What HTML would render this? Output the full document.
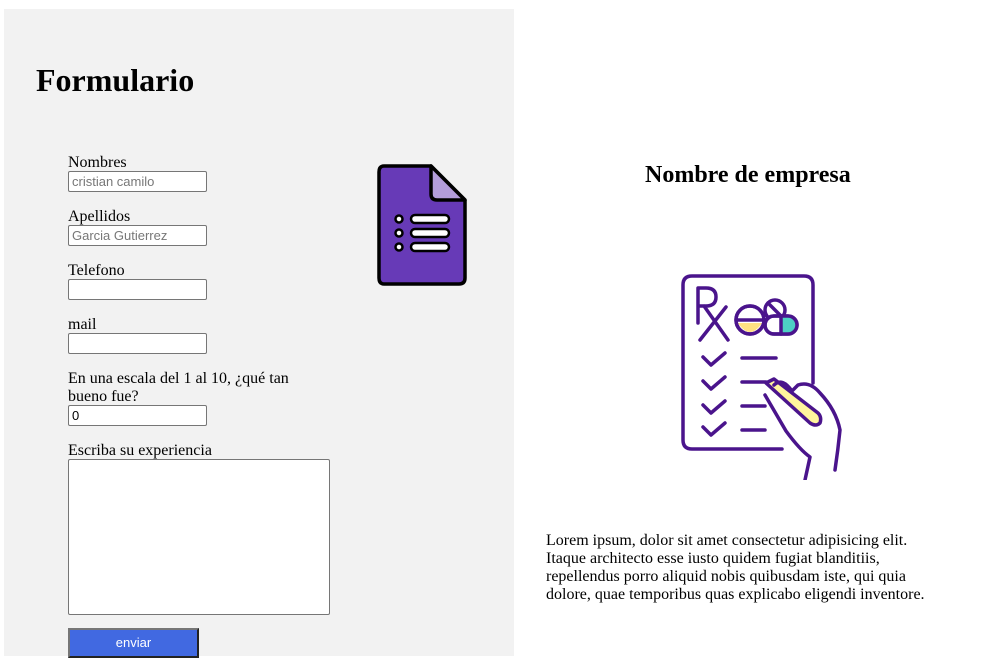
<!DOCTYPE html>
<html><head><meta charset="utf-8"><style>
*{box-sizing:border-box;margin:0;padding:0}
body{width:990px;height:656px;overflow:hidden;background:#fff;font-family:"Liberation Serif",serif;font-size:16px;position:relative}
.left{position:absolute;left:4px;top:9px;width:510px;height:647px;background:#f2f2f2}
h1{position:absolute;left:36px;top:62px;font-size:32px;font-weight:bold}
.lbl{position:absolute;left:68px;line-height:18px}
.in{position:absolute;left:68px;width:139px;height:21px;background:#fff;border:1px solid #767676;border-radius:2px;font-family:"Liberation Sans",sans-serif;font-size:13px;padding:2px 3px;color:#777;line-height:15px}
.ta{position:absolute;left:68px;top:459px;width:262px;height:156px;background:#fff;border:1px solid #767676;border-radius:2px}
.btn{position:absolute;left:68px;top:628px;width:131px;height:30px;background:#4169e1;border:2px solid;border-color:#767676 #222 #222 #767676;color:#fff;font-family:"Liberation Sans",sans-serif;font-size:13px;text-align:center;line-height:26px}
h2{position:absolute;left:645px;top:162px;font-size:24px;font-weight:bold}
p{position:absolute;left:546px;top:532px;width:400px;line-height:18px}
</style></head><body>
<div class="left"></div>
<h1>Formulario</h1>
<div class="lbl" style="top:154px">Nombres</div>
<div class="in" style="top:171px">cristian camilo</div>
<div class="lbl" style="top:208px">Apellidos</div>
<div class="in" style="top:225px">Garcia Gutierrez</div>
<div class="lbl" style="top:262px">Telefono</div>
<div class="in" style="top:279px"></div>
<div class="lbl" style="top:316px">mail</div>
<div class="in" style="top:333px"></div>
<div class="lbl" style="top:370px;width:240px">En una escala del 1 al 10, ¿qué tan bueno fue?</div>
<div class="in" style="top:405px;color:#000">0</div>
<div class="lbl" style="top:442px">Escriba su experiencia</div>
<div class="ta"></div>
<div class="btn">enviar</div>
<svg style="position:absolute;left:370px;top:160px" width="100" height="130" viewBox="0 0 100 130">
<path d="M14 6 H61 L95 40 V118 Q95 124 89 124 H14 Q9 124 9 118 V12 Q9 6 14 6Z" fill="#673ab7" stroke="#000" stroke-width="3.5" stroke-linejoin="round"/>
<path d="M61 6 V34 Q61 40 67 40 H95Z" fill="#b39ddb" stroke="#000" stroke-width="3.5" stroke-linejoin="round"/>
<g fill="#fff" stroke="#000" stroke-width="2.5"><circle cx="29" cy="59" r="3.5"/><circle cx="29" cy="73" r="3.5"/><circle cx="29" cy="87" r="3.5"/>
<rect x="41" y="55" width="38" height="8" rx="4"/><rect x="41" y="69" width="38" height="8" rx="4"/><rect x="41" y="83" width="38" height="8" rx="4"/></g>
</svg>
<h2>Nombre de empresa</h2>
<svg style="position:absolute;left:670px;top:265px" width="180" height="215" viewBox="0 0 180 215" fill="none" stroke="#4a148c" stroke-width="3.5" stroke-linecap="round" stroke-linejoin="round">
<path d="M143 118 V20 Q143 11 134 11 H22 Q13 11 13 20 V175 Q13 184 22 184 H112"/>
<path d="M28 58 V23 H36 Q46 23 46 32 Q46 41 36 41 H28 M34 41 L58 75 M56 42 L30 75"/>
<circle cx="80" cy="55" r="14" fill="#fff"/><path d="M67 55 H94"/><path d="M68 58 Q80 76 92 58Z" fill="#ffe082" stroke="none"/><circle cx="80" cy="55" r="14"/>
<circle cx="105" cy="45" r="10" fill="#fff"/><path d="M98 38 L112 52"/>
<rect x="95" y="51" width="32" height="18" rx="9" fill="#fff"/><path d="M111 52 H118 Q126 52 126 60 Q126 68 118 68 H111Z" fill="#4dd0c4" stroke="none"/><rect x="95" y="51" width="32" height="18" rx="9"/><path d="M111 51 V69"/>
<path d="M33 92 L41 100 L55 88 M33 116 L41 124 L55 112 M33 140 L41 148 L55 136 M33 162 L41 170 L55 158"/>
<path d="M72 93 H106 M72 117 H96 M72 141 H95 M72 165 H95"/>
<path d="M96 118 L140 158 Q146 162 150 158 Q152 152 148 148 L104 114Z" fill="#fff59d"/>
<path d="M104 120 Q112 112 122 126 L128 120 Q140 116 150 128 Q166 145 170 165 Q168 185 165 205 M95 130 L116 166 Q130 185 140 192 L135 215"/>
</svg>
<p>Lorem ipsum, dolor sit amet consectetur adipisicing elit. Itaque architecto esse iusto quidem fugiat blanditiis, repellendus porro aliquid nobis quibusdam iste, qui quia dolore, quae temporibus quas explicabo eligendi inventore.</p>
</body></html>
